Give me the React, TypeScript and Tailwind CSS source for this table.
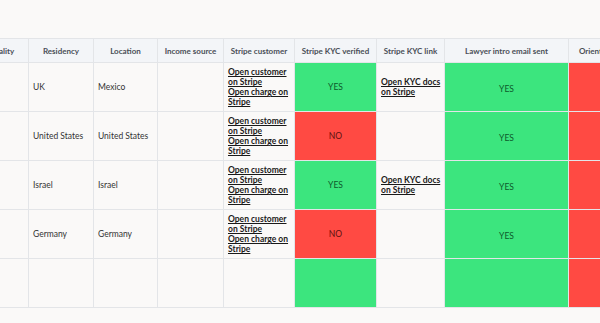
import React from 'react';

type Row = {
  residency: string;
  location: string;
  kycVerified: boolean;
  kycLink: boolean;
  showStripe: boolean;
};

const columns = [
  { label: 'Nationality', width: 'w-[68px]' },
  { label: 'Residency', width: 'w-[65px]' },
  { label: 'Location', width: 'w-[64px]' },
  { label: 'Income source', width: 'w-[66px]' },
  { label: 'Stripe customer', width: 'w-[71px]' },
  { label: 'Stripe KYC verified', width: 'w-[82px]' },
  { label: 'Stripe KYC link', width: 'w-[68px]' },
  { label: 'Lawyer intro email sent', width: 'w-[124px]' },
  { label: 'Orientation call', width: 'w-[76px]' },
];

const rows: Row[] = [
  { residency: 'UK', location: 'Mexico', kycVerified: true, kycLink: true, showStripe: true },
  { residency: 'United States', location: 'United States', kycVerified: false, kycLink: false, showStripe: true },
  { residency: 'Israel', location: 'Israel', kycVerified: true, kycLink: true, showStripe: true },
  { residency: 'Germany', location: 'Germany', kycVerified: false, kycLink: false, showStripe: true },
  { residency: '', location: '', kycVerified: true, kycLink: false, showStripe: false },
];

function StatusCell({ value, label, className }: { value: boolean; label: boolean; className?: string }) {
  const color = value ? 'bg-[#3ce57e] text-[#0c5a2b]' : 'bg-[#ff4a43] text-[#5c1111]';
  return (
    <td className={`border border-[#e3e5e8] text-center ${color} ${className ?? ''}`}>
      {label && (value ? 'YES' : 'NO')}
    </td>
  );
}

function LinkText({ children }: { children: React.ReactNode }) {
  return <a className="block font-bold text-[#1a1a1a] underline underline-offset-1">{children}</a>;
}

export default function App() {
  return (
    <div
      className="h-[323px] w-[600px] overflow-hidden bg-[#faf9f8] pt-[38px] text-[8.5px] text-[#333]"
      style={{ fontFamily: 'Lato, "Open Sans", sans-serif' }}
    >
      <table className="ml-[-40px] w-[684px] min-w-[684px] table-fixed border-collapse">
        <thead>
          <tr className="h-[24px] bg-[#f3f5f8]">
            {columns.map((c) => (
              <th
                key={c.label}
                className={`${c.width} overflow-hidden whitespace-nowrap border border-[#e3e5e8] px-1 text-center text-[8px] font-bold text-[#4a4f57]`}
              >
                {c.label}
              </th>
            ))}
          </tr>
        </thead>
        <tbody>
          {rows.map((r, i) => (
            <tr key={i} className="h-[49px]">
              <td className="border border-[#e3e5e8]" />
              <td className="border border-[#e3e5e8] px-1">{r.residency}</td>
              <td className="border border-[#e3e5e8] px-1">{r.location}</td>
              <td className="border border-[#e3e5e8] px-1" />
              <td className="border border-[#e3e5e8] pl-1 pr-0.5 leading-[10px]">
                {r.showStripe && (
                  <>
                    <LinkText>Open customer on Stripe</LinkText>
                    <LinkText>Open charge on Stripe</LinkText>
                  </>
                )}
              </td>
              <StatusCell value={r.kycVerified} label={r.showStripe} />
              <td className="border border-[#e3e5e8] pl-1 pr-0 leading-[10px]">
                {r.kycLink && <LinkText>Open KYC docs on Stripe</LinkText>}
              </td>
              <StatusCell value={true} label={r.showStripe} className="pt-1" />
              <StatusCell value={false} label={false} />
            </tr>
          ))}
        </tbody>
      </table>
    </div>
  );
}
